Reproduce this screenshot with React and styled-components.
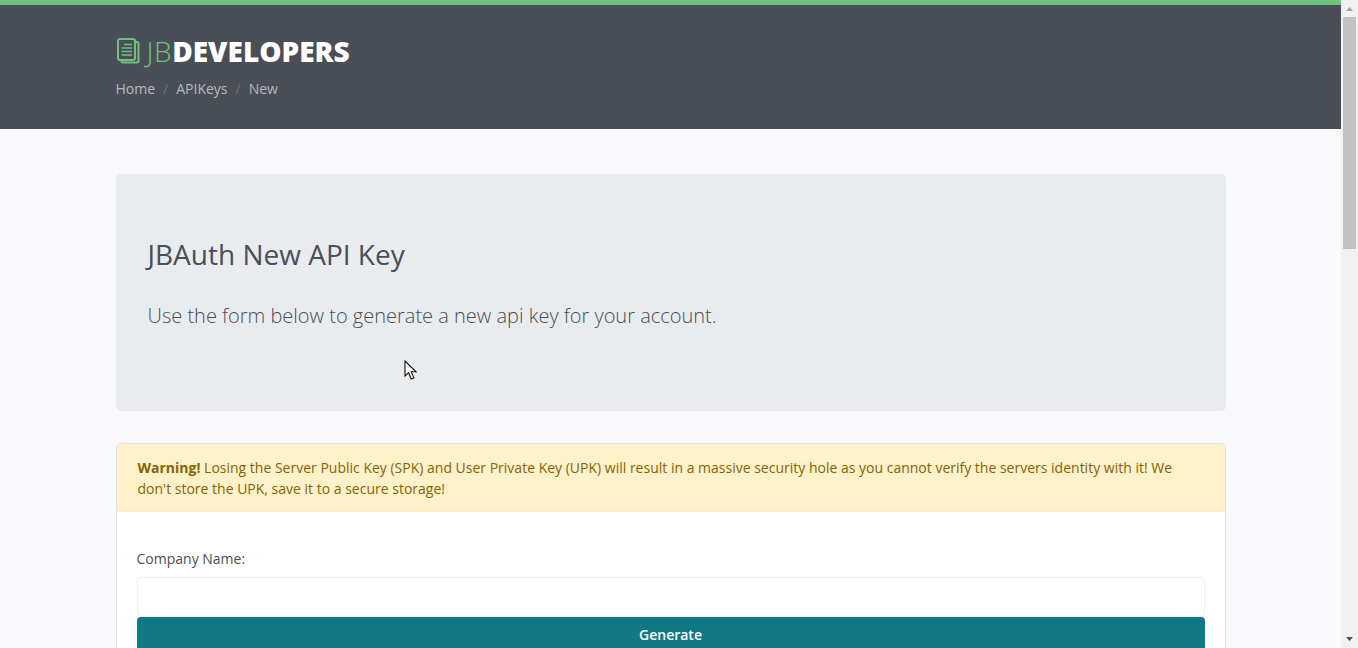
import React from 'react';
import styled, { createGlobalStyle } from 'styled-components';

const GlobalStyle = createGlobalStyle`
  html, body {
    margin: 0;
    padding: 0;
    height: 100%;
    overflow: hidden;
    background: #f9f9fb;
  }
  * {
    box-sizing: border-box;
  }
  body {
    font-family: 'Open Sans', 'Liberation Sans', sans-serif;
    font-size: 14px;
    color: #4a4e57;
  }
`;

const Shell = styled.div`
  display: flex;
  height: 648px;
  width: 1358px;
  overflow: hidden;
`;

const Page = styled.div`
  flex: 1;
  min-width: 0;
  overflow: hidden;
`;

const Header = styled.header`
  background-color: #4a4e57;
  border-top: 5px solid #6fc27d;
  height: 129px;
`;

const Container = styled.div`
  width: 1110px;
  margin-left: 115.5px;
`;

const Logo = styled.div`
  display: flex;
  align-items: center;
  height: 34px;
  padding-top: 29px;
  box-sizing: content-box;
`;

const LogoIcon = styled.svg`
  width: 23px;
  height: 26px;
  margin: 0 7px 0 1px;
  color: #6fc27d;
`;

const LogoLight = styled.span`
  font-size: 28px;
  font-weight: 350;
  color: #6fc27d;
  letter-spacing: 0.6px;
`;

const LogoBold = styled.span`
  font-size: 28px;
  font-weight: 800;
  color: #ffffff;
`;

const Breadcrumb = styled.nav`
  display: flex;
  align-items: center;
  margin-top: 10px;
  font-size: 14px;
  line-height: 21px;
`;

const Crumb = styled.span`
  color: #b6b9bf;
`;

const Slash = styled.span`
  color: #6c717b;
  padding: 0 8px;
`;

const Main = styled.main`
  padding-top: 45px;
`;

const Jumbotron = styled.section`
  position: relative;
  height: 237px;
  padding: 63px 32px 0;
  background-color: #e9ecef;
  border-radius: 5px;
`;

const Title = styled.h3`
  margin: 0;
  font-size: 28px;
  font-weight: 400;
  line-height: 34px;
  color: #4a4e57;
`;

const Lead = styled.p`
  margin: 30px 0 0;
  font-size: 20px;
  font-weight: 300;
  line-height: 30px;
  color: #4a4e57;
`;

const Pointer = styled.svg`
  position: absolute;
  left: 288px;
  top: 186px;
  width: 14px;
  height: 21px;
`;

const Card = styled.section`
  margin-top: 32px;
  background-color: #ffffff;
  border: 1px solid #dfe1e6;
  border-radius: 5px;
`;

const Alert = styled.div`
  height: 68px;
  padding: 13px 21px 0;
  background-color: #fff1c9;
  border-bottom: 1px solid #ffeeba;
  border-radius: 4px 4px 0 0;
  font-size: 14px;
  line-height: 21px;
  color: #856404;

  strong {
    font-weight: 700;
  }
`;

const CardBody = styled.div`
  padding: 36px 20px 0;
`;

const Label = styled.label`
  display: block;
  font-size: 14px;
  line-height: 21px;
  margin-bottom: 8px;
  color: #4a4e57;
`;

const Input = styled.input`
  display: block;
  width: 100%;
  height: 40px;
  border: 1px solid #eeeff2;
  border-radius: 4px;
  background: #ffffff;
  outline: none;
`;

const GenerateButton = styled.button`
  display: block;
  width: 100%;
  height: 44px;
  border: none;
  border-radius: 4px;
  background-color: #117888;
  color: #ffffff;
  font-family: inherit;
  font-size: 14px;
  font-weight: 600;
  padding: 0 0 10px;
`;

const Scrollbar = styled.aside`
  position: relative;
  width: 17px;
  flex: none;
  background-color: #f1f1f1;
`;

const ScrollThumb = styled.div`
  position: absolute;
  top: 17px;
  left: 2px;
  width: 13px;
  height: 232px;
  background-color: #c1c1c1;
`;

const ScrollArrow = styled.svg`
  position: absolute;
  left: 5px;
  width: 7px;
  height: 4px;
  ${(props) => (props.$down ? 'bottom: 7px;' : 'top: 7px;')}
`;

const App = () => {
  return (
    <Shell>
      <GlobalStyle />
      <Page>
        <Header>
          <Container>
            <Logo>
              <LogoIcon viewBox="0 0 23 26" fill="none" stroke="currentColor" strokeWidth="2">
                <rect x="1" y="1" width="17" height="21" rx="2" />
                <path d="M18.500 4H20a1.500 1.500 0 0 1 1.500 1.500V23a1.500 1.500 0 0 1-1.500 1.500H6A1.500 1.500 0 0 1 4.500 23V22.500" />
                <path d="M7 6.500h8M4.500 10h10.500M4.500 13.500h10.500M4.500 17h10.500" strokeWidth="1.700" />
              </LogoIcon>
              <LogoLight>JB</LogoLight>
              <LogoBold>DEVELOPERS</LogoBold>
            </Logo>
            <Breadcrumb>
              <Crumb>Home</Crumb>
              <Slash>/</Slash>
              <Crumb>APIKeys</Crumb>
              <Slash>/</Slash>
              <Crumb>New</Crumb>
            </Breadcrumb>
          </Container>
        </Header>
        <Main>
          <Container>
            <Jumbotron>
              <Title>JBAuth New API Key</Title>
              <Lead>Use the form below to generate a new api key for your account.</Lead>
              <Pointer viewBox="0 0 14 21">
                <path d="M1 1v15l3.600-3.300 2.700 6.300 2.600-1.100-2.700-6.100H12z" fill="#ffffff" stroke="#111111" strokeWidth="1.100" />
              </Pointer>
            </Jumbotron>
            <Card>
              <Alert>
                <strong>Warning!</strong> Losing the Server Public Key (SPK) and User Private Key (UPK) will result in a massive security hole as you cannot verify the servers identity with it! We don't store the UPK, save it to a secure storage!
              </Alert>
              <CardBody>
                <Label>Company Name:</Label>
                <Input type="text" />
                <GenerateButton>Generate</GenerateButton>
              </CardBody>
            </Card>
          </Container>
        </Main>
      </Page>
      <Scrollbar>
        <ScrollArrow viewBox="0 0 7 4">
          <path d="M3.500 0L7 4H0z" fill="#a3a3a3" />
        </ScrollArrow>
        <ScrollThumb />
        <ScrollArrow $down viewBox="0 0 7 4">
          <path d="M0 0h7L3.500 4z" fill="#505050" />
        </ScrollArrow>
      </Scrollbar>
    </Shell>
  );
};

export default App;
